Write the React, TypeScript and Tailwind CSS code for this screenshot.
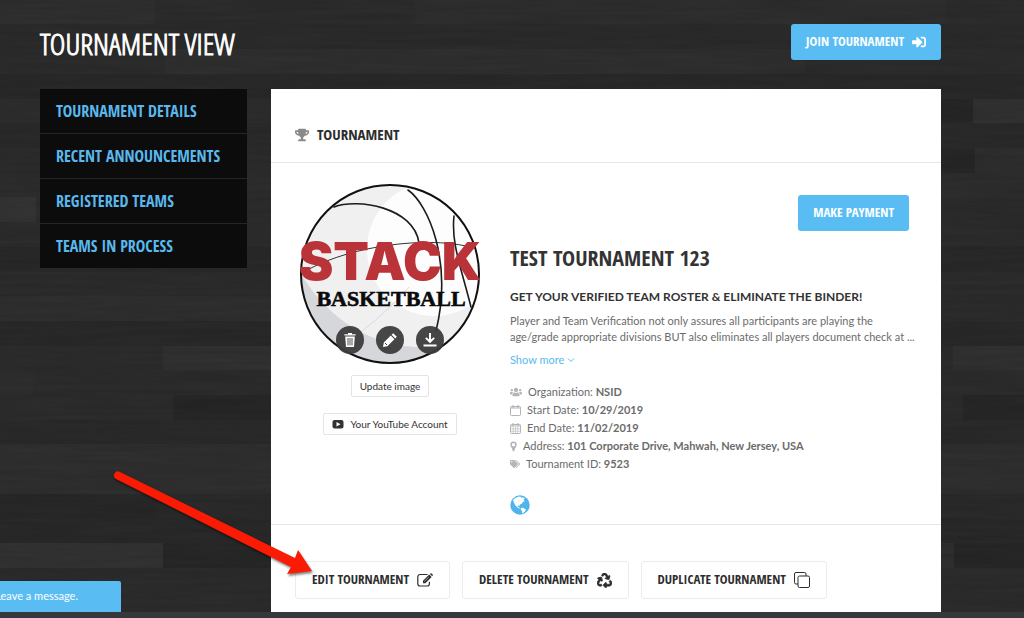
import type { ReactNode } from "react";
import { FaRecycle, FaSignInAlt, FaTags, FaTrophy, FaUsers } from "react-icons/fa";

const display = "font-['Open_Sans_Condensed','Roboto_Condensed',sans-serif] uppercase";

/* Planks of the wooden floor: x, y, width, height, colour */
const planks: [number, number, number, number, string][] = [
  [0, 0, 155, 24, "#2f2f2f"],
  [155, 0, 260, 24, "#2c2c2c"],
  [415, 0, 530, 24, "#2e2e2e"],
  [0, 24, 1024, 25, "#2b2b2b"],
  [165, 49, 640, 25, "#2f2f2f"],
  [805, 49, 219, 25, "#2c2c2c"],
  [0, 74, 1024, 25, "#292929"],
  [940, 99, 33, 24, "#272727"],
  [973, 99, 51, 24, "#313131"],
  [0, 99, 271, 24, "#2d2d2d"],
  [0, 123, 1024, 25, "#2a2a2a"],
  [940, 148, 35, 25, "#272727"],
  [975, 148, 49, 25, "#2e2e2e"],
  [0, 173, 1024, 24, "#2d2d2d"],
  [0, 197, 36, 25, "#333333"],
  [975, 197, 49, 25, "#2b2b2b"],
  [0, 247, 1024, 25, "#292929"],
  [0, 296, 271, 25, "#2f2f2f"],
  [0, 321, 1024, 25, "#292929"],
  [163, 346, 108, 24, "#313131"],
  [953, 346, 71, 24, "#313131"],
  [0, 370, 33, 25, "#2e2e2e"],
  [173, 395, 98, 25, "#272727"],
  [963, 395, 61, 25, "#272727"],
  [0, 420, 1024, 24, "#2a2a2a"],
  [0, 444, 1024, 50, "#2f2f2f"],
  [0, 494, 157, 24, "#282828"],
  [157, 494, 867, 24, "#2a2a2a"],
  [0, 518, 1024, 25, "#292929"],
  [0, 543, 163, 25, "#323232"],
  [163, 543, 110, 25, "#272727"],
  [940, 543, 14, 25, "#2f2f2f"],
  [954, 543, 70, 25, "#272727"],
];

function Floor() {
  return (
    <svg className="absolute inset-0 h-full w-full" viewBox="0 0 1024 618" preserveAspectRatio="xMidYMin slice" aria-hidden="true">
      <filter id="grain" x="0" y="0" width="100%" height="100%">
        <feTurbulence type="fractalNoise" baseFrequency="0.012 0.2" numOctaves="3" seed="4" />
        <feColorMatrix values="0 0 0 0 0  0 0 0 0 0  0 0 0 0 0  0.9 0 0 0 -0.25" />
      </filter>
      <rect width="1024" height="618" fill="#2c2c2c" />
      {planks.map(([x, y, w, h, c]) => (
        <rect key={`${x}-${y}`} x={x} y={y} width={w} height={h} fill={c} />
      ))}
      <rect width="1024" height="618" filter="url(#grain)" opacity="0.18" />
    </svg>
  );
}

function Logo() {
  return (
    <svg className="block h-[182px] w-[190px]" viewBox="0 0 190 182" role="img" aria-label="Stack Basketball">
      <defs>
        <clipPath id="ball">
          <circle cx="95" cy="91" r="89" />
        </clipPath>
      </defs>
      <g clipPath="url(#ball)">
        <rect width="190" height="182" fill="#f0f0f1" />
        <path d="M0 80C20 120 60 160 120 164C150 164 170 155 190 140V190H0Z" fill="#d5d7da" />
        <path d="M18 80C25 125 60 152 110 160C150 162 175 130 186 100V40L120 0H40Z" fill="#f0f0f1" />
        <circle cx="139" cy="66" r="67" fill="#fdfdfd" />
        <path d="M114 104Q96 125 66 149" stroke="#d9d9db" strokeWidth="1" fill="none" />
      </g>
      <g fill="none" stroke="#1c1c1c" strokeLinecap="round">
        <path d="M39 24C62 15 119 24 124 60" strokeWidth="1.6" />
        <path d="M113 7C133 21 158 78 141 148" strokeWidth="1.6" />
        <path d="M159 33C156 60 166 84 176 124" strokeWidth="1.6" />
        <path d="M14 86C60 62 130 54 171 63" strokeWidth="0.9" />
        <circle cx="95" cy="91" r="89" strokeWidth="2" stroke="#111" />
      </g>
      <text x="95" y="97" textAnchor="middle" className="fill-[#b93338] font-['Inter',sans-serif] text-[52px] font-black">STACK</text>
      <text x="96" y="123" textAnchor="middle" stroke="#0a0a0a" strokeWidth="0.6" className="fill-[#0a0a0a] font-['Liberation_Serif',serif] text-[22px] font-bold">BASKETBALL</text>
    </svg>
  );
}

function CalendarIcon({ grid = false }: { grid?: boolean }) {
  return (
    <svg viewBox="0 0 11 11" className="size-[11px]" fill="none" stroke="currentColor" aria-hidden="true">
      <rect x="0.5" y="1.5" width="10" height="9" rx="0.8" />
      <path d="M0.5 3h10M3 0v2.5M8 0v2.5" strokeWidth="1.2" />
      {grid && <path d="M1 5.8h9M1 8.2h9M3.2 4v6.5M5.5 4v6.5M7.8 4v6.5" strokeWidth="0.6" />}
    </svg>
  );
}

function PinIcon() {
  return (
    <svg viewBox="0 0 7 11" className="h-[11px] w-[7px]" aria-hidden="true">
      <path fillRule="evenodd" fill="currentColor" d="M3.5 0.5A3.2 3.2 0 0 1 6.7 3.7C6.7 5 5.8 6 5.3 7L4.3 9.8Q3.5 11 2.7 9.8L1.7 7C1.2 6 .3 5 .3 3.7A3.2 3.2 0 0 1 3.5 .5ZM3.5 2A1.7 1.7 0 1 0 3.5 5.4A1.7 1.7 0 1 0 3.5 2Z" />
    </svg>
  );
}

function GlobeIcon() {
  return (
    <svg viewBox="0 0 20 20" className="size-5" aria-hidden="true">
      <circle cx="10" cy="10" r="9.7" fill="#4fb4ee" />
      <path d="M3 5C5 2.5 8 1.3 10.5 1.5L11 2.8L12.8 2.2L15 3.2L13.5 4.5L14.8 6.2L13 6.8L11.5 9L9.8 9.6L9.6 11L8 10.4L7.6 11.6L9.4 12.6L10.2 13.4L8.6 13.2L5.8 11L4.2 8.2Z" fill="#fff" />
      <path d="M10.8 13L13 12.8L16 14.4L15.2 16.2L13 18L12 18.4L12.2 16.2L10.8 14.8Z" fill="#fff" />
    </svg>
  );
}

function EditIcon() {
  return (
    <svg viewBox="0 0 16 14" className="h-[14px] w-4" aria-hidden="true">
      <path d="M10.5 1.5H3A2.2 2.2 0 0 0 .8 3.7V10.8A2.2 2.2 0 0 0 3 13H10.2A2.2 2.2 0 0 0 12.4 10.8V8.8" fill="none" stroke="currentColor" strokeWidth="1.2" />
      <path d="M12.2 1.6L14.6 4L8.4 10.2H6V7.8ZM12.9 .9L13.5 .4Q14 0 14.5 .4L15.7 1.6Q16.1 2.1 15.7 2.6L15.2 3.3Z" fill="currentColor" />
      <path d="M7.4 8.4L11.8 4" stroke="#fff" strokeWidth="0.6" />
    </svg>
  );
}

function RoundButton({ label, children }: { label: string; children: ReactNode }) {
  return (
    <button aria-label={label} className="flex size-7 items-center justify-center rounded-full bg-[#3c3c3c]/95 text-white">
      <svg viewBox="0 0 16 16" className="size-4" fill="currentColor" aria-hidden="true">{children}</svg>
    </button>
  );
}

function ActionButton({ label, icon }: { label: string; icon: ReactNode }) {
  return (
    <button className={`${display} flex h-[38px] items-center gap-2 rounded-[3px] border border-[#ececec] px-4 text-[13px] font-bold text-[#2d2d2d]`}>
      {label}
      {icon}
    </button>
  );
}

function Detail({ icon, label, value }: { icon: ReactNode; label: string; value: string }) {
  return (
    <li className="flex items-center gap-[6px] whitespace-nowrap">
      <span className="text-[#b5b5b5]">{icon}</span>
      <span>
        {label}: <b>{value}</b>
      </span>
    </li>
  );
}

const links = ["Tournament Details", "Recent Announcements", "Registered Teams", "Teams in Process"];

export default function App() {
  return (
    <div className="relative flex min-h-screen flex-col overflow-hidden bg-[#2a2a2a] font-['Lato',sans-serif]">
      <Floor />
      <div className="relative flex flex-1 flex-col pr-[83px] pl-10">
        <header className="flex h-[89px] items-start justify-between pt-6">
          <h1 className="font-['Open_Sans_Condensed_Light','Open_Sans_Condensed','Roboto_Condensed',sans-serif] text-[30px] leading-10 font-light text-white uppercase [-webkit-text-stroke:1px_white]">Tournament View</h1>
          <button className={`${display} flex h-9 items-center gap-2 rounded-[3px] bg-[#59bdf4] px-[15px] text-[13px] font-bold text-white`}>
            Join Tournament
            <FaSignInAlt size={14} />
          </button>
        </header>

        <div className="flex flex-1 gap-6">
          <nav className="w-[207px] shrink-0 self-start bg-[#0c0c0c]">
            <ul className="divide-y divide-[#262626]">
              {links.map((l) => (
                <li key={l}>
                  <a href="#" className={`${display} flex h-11 items-center px-4 text-[16px] font-bold text-[#59b9ee]`}>{l}</a>
                </li>
              ))}
            </ul>
          </nav>

          <main className="flex min-w-0 flex-1 flex-col bg-white">
            <h2 className={`${display} flex h-[74px] items-center gap-2 border-b border-[#e6e6e6] px-6 pt-[18px] text-[15px] font-bold text-[#2d2d2d]`}>
              <FaTrophy size={14} color="#8a8a8a" />
              Tournament
            </h2>

            <section className="flex gap-[25px] border-b border-[#e6e6e6] pt-5 pr-8 pb-[9px] pl-6">
              <div className="flex w-[190px] shrink-0 flex-col items-center">
                <div className="relative">
                  <Logo />
                  <div className="absolute inset-x-0 bottom-[11px] flex justify-center gap-3">
                    <RoundButton label="Delete image">
                      <path d="M6 1h4v1.2h3.6v1.4H2.4V2.2H6zM3.2 4.6h9.6L12 15H4z" />
                      <path d="M6 6v7.4M8 6v7.4M10 6v7.4" stroke="#3c3c3c" strokeWidth="0.9" />
                    </RoundButton>
                    <RoundButton label="Crop image">
                      <path d="M11.2 1.2l3.6 3.6-1.6 1.6-3.6-3.6zM8.8 3.6l3.6 3.6-7 7L1 15l.8-4.4z" />
                      <path d="M3 11l2 2" stroke="#3c3c3c" />
                    </RoundButton>
                    <RoundButton label="Download image">
                      <path d="M7 1h2v6.6l2.6-2.4 1.2 1.3L8 11.2 3.2 6.5l1.2-1.3L7 7.6zM1.5 12.6h13v2h-13z" />
                    </RoundButton>
                  </div>
                </div>
                <button className="mt-2.5 h-[22px] rounded-[2px] border border-[#e4e4e4] px-2 text-[10px] text-[#333]">Update image</button>
                <button className="mt-4 flex h-[22px] items-center gap-[6px] rounded-[2px] border border-[#e4e4e4] px-2 text-[10px] text-[#333]">
                  <svg viewBox="0 0 12 9" className="h-[9px] w-3" aria-hidden="true">
                    <rect x="0.5" width="11" height="8.5" rx="2" fill="#333" />
                    <path d="M4.5 2v4.5l4-2.25z" fill="#fff" />
                  </svg>
                  Your YouTube Account
                </button>
              </div>

              <div className="flex min-w-0 flex-1 flex-col pt-3 text-[11px] text-[#6b6b6b]">
                <button className={`${display} h-9 self-end rounded-[3px] bg-[#59bdf4] px-[15px] text-[13px] font-bold text-white`}>Make Payment</button>
                <h3 className={`${display} mt-2.5 text-[22px] leading-8 font-bold text-[#333]`}>Test Tournament 123</h3>
                <h4 className="mt-3.5 text-[12px] leading-5 font-bold whitespace-nowrap text-[#333] uppercase">Get your verified team roster &amp; eliminate the binder!</h4>
                <p className="mt-1.5 -mr-2 leading-4">
                  Player and Team Verification not only assures all participants are playing the age/grade appropriate divisions BUT also eliminates all players document check at ...
                </p>
                <a href="#" className="mt-[7px] flex items-center gap-[3px] leading-4 text-[#59b9ee]">
                  Show more
                  <svg viewBox="0 0 8 6" className="h-1.5 w-2" fill="none" stroke="currentColor" aria-hidden="true">
                    <path d="M1 1.5L4 4.5L7 1.5" />
                  </svg>
                </a>
                <ul className="mt-[15px] leading-[18px]">
                  <Detail icon={<FaUsers size={12} />} label="Organization" value="NSID" />
                  <Detail icon={<CalendarIcon />} label="Start Date" value="10/29/2019" />
                  <Detail icon={<CalendarIcon grid />} label="End Date" value="11/02/2019" />
                  <Detail icon={<PinIcon />} label="Address" value="101 Corporate Drive, Mahwah, New Jersey, USA" />
                  <Detail icon={<FaTags size={10} />} label="Tournament ID" value="9523" />
                </ul>
                <a href="#" aria-label="Website" className="mt-[22px] self-start">
                  <GlobeIcon />
                </a>
              </div>
            </section>

            <div className="flex gap-3 px-6 pt-9 pb-3">
              <ActionButton label="Edit Tournament" icon={<EditIcon />} />
              <ActionButton label="Delete Tournament" icon={<FaRecycle size={15} strokeWidth={24} stroke="currentColor" />} />
              <ActionButton
                label="Duplicate Tournament"
                icon={
                  <svg viewBox="0 0 16 16" className="size-4" fill="none" stroke="currentColor" aria-hidden="true">
                    <path d="M4 12H2A1.5 1.5 0 0 1 .5 10.5V2A1.5 1.5 0 0 1 2 .5h8.5A1.5 1.5 0 0 1 12 2v2" />
                    <rect x="4" y="4" width="11.5" height="11.5" rx="1.5" />
                  </svg>
                }
              />
            </div>
          </main>
        </div>
      </div>

      <footer className="relative h-1.5 shrink-0 bg-[#37383c]" />
      <button className="absolute bottom-1.5 left-0 flex h-[31px] w-[121px] items-center justify-end overflow-hidden rounded-tr-[2px] bg-[#59bdf4] pr-[43px] text-[11px] whitespace-nowrap text-white">
        Leave a message.
      </button>
      <svg className="pointer-events-none absolute top-[460px] left-[105px] h-[125px] w-[220px]" viewBox="105 460 220 125" aria-hidden="true">
        <path
          d="M120 472L295 558L298 550L312 571L287 574L291 567L116 479A4 4 0 0 1 120 472Z"
          fill="#fb1a04"
          className="drop-shadow-[1px_2px_1px_rgba(0,0,0,0.5)]"
        />
      </svg>
    </div>
  );
}
